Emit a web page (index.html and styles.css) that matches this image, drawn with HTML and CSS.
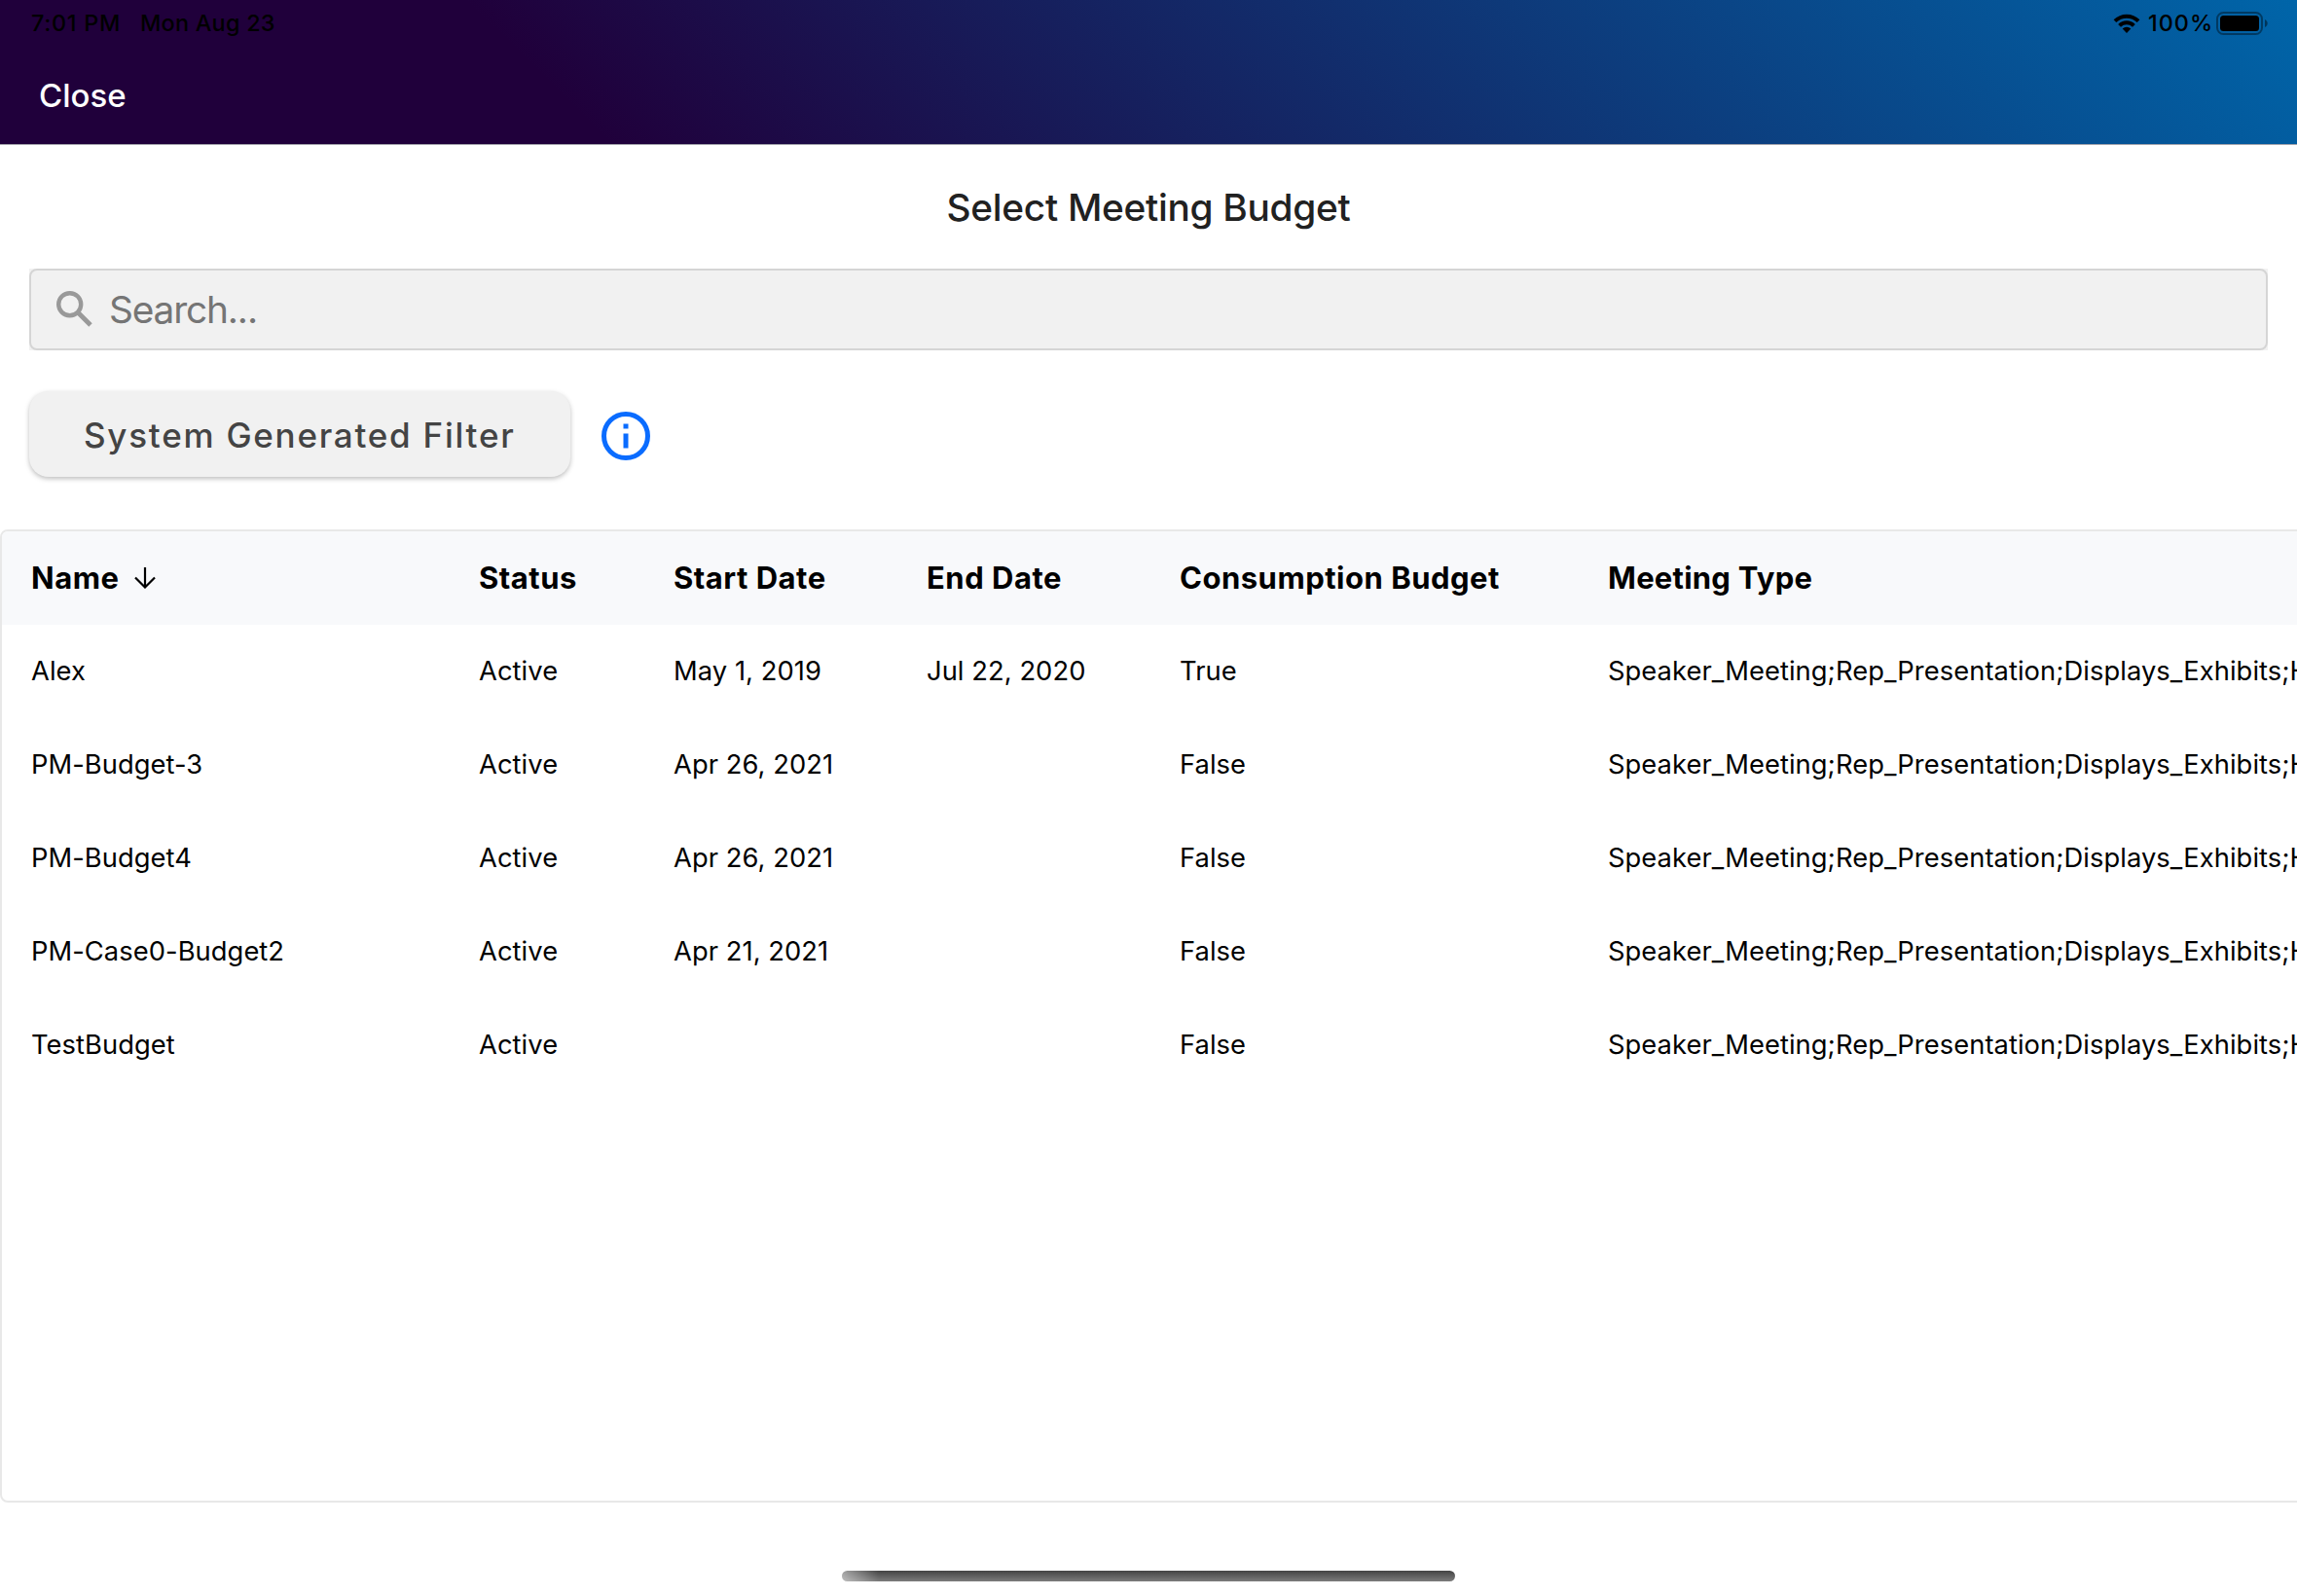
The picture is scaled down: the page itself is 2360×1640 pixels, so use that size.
FILE: index.html
```html
<!DOCTYPE html>
<html lang="en">
<head>
<meta charset="utf-8">
<title>Select Meeting Budget</title>
<link rel="stylesheet" href="styles.css">
</head>
<body>
<header class="topbar">
  <div class="status">
    <span class="time">7:01 PM</span>
    <span class="date">Mon Aug 23</span>
    <svg class="wifi" width="28" height="20" viewBox="0 0 28 20"><path d="M0.6 6.2a19.2 19.2 0 0 1 26.8 0l-2.7 2.8a15.3 15.3 0 0 0-21.4 0zM5.2 10.9a12.6 12.6 0 0 1 17.6 0l-2.8 2.8a8.7 8.7 0 0 0-12 0zM9.7 15.5a6.2 6.2 0 0 1 8.6 0L14 19.9z"/></svg>
    <span class="percent">100%</span>
    <svg class="battery" width="53" height="24" viewBox="0 0 53 24"><rect x="1" y="1" width="46" height="22" rx="6.5" fill="none" stroke="#000" stroke-opacity=".4" stroke-width="2"/><rect x="4" y="4" width="40" height="16" rx="3.5"/><path d="M50 8c3.600 1.500 3.600 6.500 0 8z" fill-opacity=".45"/></svg>
  </div>
  <button class="close">Close</button>
</header>
<main class="content">
  <h1 class="title">Select Meeting Budget</h1>
  <div class="search">
    <div class="search-box">
      <svg class="search-icon" width="37" height="37" viewBox="0 0 37 37" fill="none" stroke="#999" stroke-width="4.400"><circle cx="13.700" cy="13.700" r="11.500"/><path d="M22.500 22.500l12.500 12.500" stroke-width="4.800"/></svg>
      <span class="placeholder">Search...</span>
    </div>
  </div>
  <div class="filters">
    <button class="filter">System Generated Filter</button>
    <svg class="info" width="50" height="50" viewBox="0 0 50 50"><circle cx="25" cy="25" r="22.500" fill="none" stroke="#0a6cff" stroke-width="5"/><path d="M22.500 12.500h5v5h-5zM22.500 22.500h5v15h-5z" fill="#0a6cff"/></svg>
  </div>
  <section class="table">
    <div class="row head"><span>Name<svg class="sort" width="22" height="22" viewBox="0 0 22 22" fill="none" stroke="#000" stroke-width="2.200"><path d="M11 0v20M1 10.500l10 10 10-10"/></svg></span><span>Status</span><span>Start Date</span><span>End Date</span><span>Consumption Budget</span><span class="type">Meeting Type</span></div>
    <div class="row"><span>Alex</span><span>Active</span><span>May 1, 2019</span><span>Jul 22, 2020</span><span>True</span><span>Speaker_Meeting;Rep_Presentation;Displays_Exhibits;H</span></div>
    <div class="row"><span>PM-Budget-3</span><span>Active</span><span>Apr 26, 2021</span><span></span><span>False</span><span>Speaker_Meeting;Rep_Presentation;Displays_Exhibits;H</span></div>
    <div class="row"><span>PM-Budget4</span><span>Active</span><span>Apr 26, 2021</span><span></span><span>False</span><span>Speaker_Meeting;Rep_Presentation;Displays_Exhibits;H</span></div>
    <div class="row"><span>PM-Case0-Budget2</span><span>Active</span><span>Apr 21, 2021</span><span></span><span>False</span><span>Speaker_Meeting;Rep_Presentation;Displays_Exhibits;H</span></div>
    <div class="row"><span>TestBudget</span><span>Active</span><span></span><span></span><span>False</span><span>Speaker_Meeting;Rep_Presentation;Displays_Exhibits;H</span></div>
  </section>
</main>
<footer class="home"><div class="home-bar"></div></footer>
</body>
</html>
```
FILE: styles.css
```css
* { box-sizing: border-box; }
body {
  margin: 0;
  width: 2360px;
  height: 1640px;
  display: flex;
  flex-direction: column;
  overflow: hidden;
  background: #fff;
  color: #000;
  font-family: Inter, "Liberation Sans", sans-serif;
}
button { border: 0; background: none; font-family: inherit; text-align: left; white-space: nowrap; }
.topbar {
  height: 149px;
  border-bottom: 1px solid #a5a5ad;
  background: linear-gradient(45deg, #20003b 0%, #20003b 25%, #0065a9 100%);
}
.status {
  height: 48px;
  padding: 0 30px 0 32px;
  display: flex;
  align-items: center;
  font-size: 23.400px;
  font-weight: 500;
  line-height: 48px;
}
.time { letter-spacing: .7px; width: 112px; }
.date { letter-spacing: .25px; flex: 1; }
.percent { width: 70px; margin-left: 8px; letter-spacing: 1px; }
.close { display: block; padding: 0 0 0 40px; height: 100px; line-height: 100px; color: #fff; font-size: 33px; font-weight: 550; letter-spacing: 0; }
.content { display: flex; flex-direction: column; flex: none; }
.title { margin: 0; height: 127px; line-height: 128px; text-align: center; font-size: 38.800px; font-weight: 500; letter-spacing: -.29px; color: #212121; }
.search { margin: 0 30px; height: 84px; background: #f1f1f1; }
.search-box { height: 84px; display: flex; align-items: center; border: 2px solid #d5d5d5; border-radius: 8px; padding-left: 26px; }
.search-icon { margin-top: -2px; }
.placeholder { margin: -2px 0 0 17px; font-size: 38.800px; letter-spacing: -1.150px; color: #757575; }
.filters { display: flex; align-items: center; gap: 32px; margin: 42px 30px 54px; }
.filter {
  width: 556px;
  height: 88px;
  padding: 1px 0 0 56px;
  border-radius: 20px;
  background: #f1f1f1;
  box-shadow: 0 2px 5px rgba(0, 0, 0, .26);
  color: #444;
  font-size: 35px;
  font-weight: 500;
  letter-spacing: 1.750px;
}
.info { margin-top: 3px; }
.table { width: 2420px; height: 1000px; border: 2px solid #e8e8e8; border-radius: 8px; overflow: hidden; }
.row {
  display: grid;
  grid-template-columns: 460px 200px 260px 260px 440px 1fr;
  height: 96px;
  align-items: center;
  padding: 0 0 2px 30px;
  font-size: 27.300px;
  letter-spacing: .07px;
  white-space: nowrap;
}
.head { background: #f8f9fb; font-size: 31px; font-weight: 700; letter-spacing: .5px; }
.head .type { letter-spacing: .25px; }
.sort { margin-left: 16px; }
.home { display: flex; justify-content: center; padding-top: 70px; }
.home-bar {
  width: 630px;
  height: 11px;
  border-radius: 6px;
  background: linear-gradient(90deg, rgba(255, 255, 255, .5), rgba(255, 255, 255, 0) 6%), linear-gradient(#444, #7c7c7c);
}
```
